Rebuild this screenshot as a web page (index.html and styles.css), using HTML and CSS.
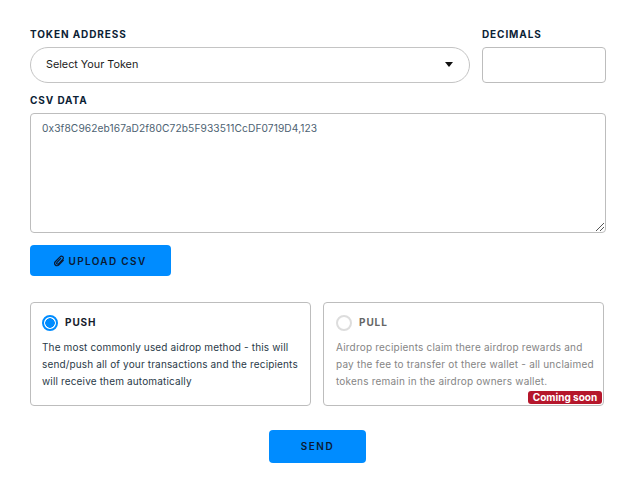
FILE: index.html
```html
<!DOCTYPE html>
<html lang="en">
<head>
    <meta charset="UTF-8">
    <meta name="viewport" content="width=device-width, initial-scale=1.0">
    <title>Airdrop</title>
    <link rel="stylesheet" href="styles.css">
</head>
<body>
    <div class="page">
        <div class="top-row">
            <div class="token-col">
                <div class="label">TOKEN ADDRESS</div>
                <div class="select">
                    <span class="select-text">Select Your Token</span>
                    <span class="caret"></span>
                </div>
            </div>
            <div class="decimals-col">
                <div class="label">DECIMALS</div>
                <div class="decimals"></div>
            </div>
        </div>

        <div class="label csv-label">CSV DATA</div>
        <div class="csv-box">
            0x3f8C962eb167aD2f80C72b5F933511CcDF0719D4,123
            <svg class="grip" width="9" height="9" viewBox="0 0 9 9">
                <path d="M9 1 L1 9 M9 5 L5 9" stroke="#555" stroke-width="1" fill="none"/>
            </svg>
        </div>

        <div class="upload-btn">
            <svg class="clip" width="11" height="12" viewBox="0 0 11 12">
                <path d="M9.6 5.2 L5 9.9 C3.9 11 2.2 11 1.3 10 C0.4 9 0.5 7.5 1.5 6.5 L6 1.9 C6.8 1 8 1 8.8 1.7 C9.6 2.5 9.5 3.7 8.7 4.5 L4.5 8.8 C4 9.3 3.3 9.3 2.9 8.9 C2.5 8.4 2.6 7.8 3 7.3 L7 3.2" stroke="#0b1a33" stroke-width="1.2" fill="none"/>
            </svg>
            UPLOAD CSV
        </div>

        <div class="cards">
            <div class="card">
                <div class="card-head">
                    <span class="radio radio-on"></span>
                    <span class="card-title">PUSH</span>
                </div>
                <p class="card-text">The most commonly used aidrop method - this will<br>send/push all of your transactions and the recipients<br>will receive them automatically</p>
            </div>
            <div class="card card-off">
                <div class="card-head">
                    <span class="radio"></span>
                    <span class="card-title">PULL</span>
                </div>
                <p class="card-text">Airdrop recipients claim there airdrop rewards and<br>pay the fee to transfer ot there wallet - all unclaimed<br>tokens remain in the airdrop owners wallet.</p>
                <span class="soon">Coming soon</span>
            </div>
        </div>

        <div class="send-row">
            <div class="send-btn">SEND</div>
        </div>
    </div>
</body>
</html>
```

FILE: styles.css
```css
* {
    margin: 0;
    padding: 0;
    box-sizing: border-box;
}

body {
    background: #fff;
    font-family: "Inter", "Open Sans", sans-serif;
    color: #1c2733;
}

.page {
    width: 637px;
    padding: 28px 31px 0 30px;
}

.top-row {
    display: flex;
    gap: 12px;
}

.token-col {
    width: 440px;
}

.decimals-col {
    width: 124px;
}

.label {
    height: 19px;
    font-size: 10px;
    line-height: 12px;
    font-weight: 700;
    letter-spacing: 0.9px;
    color: #0c2235;
}

.select {
    display: flex;
    align-items: center;
    justify-content: space-between;
    height: 36px;
    padding: 0 16px 2px 15px;
    border: 1px solid #c4c4c4;
    border-radius: 18px;
    font-size: 10.8px;
    color: #1a1a1a;
}

.caret {
    width: 0;
    height: 0;
    border-left: 4.5px solid transparent;
    border-right: 4.5px solid transparent;
    border-top: 5px solid #111;
}

.decimals {
    height: 36px;
    border: 1px solid #bdbdbd;
    border-radius: 4px;
}

.csv-label {
    margin-top: 11px;
}

.csv-box {
    position: relative;
    width: 576px;
    height: 120px;
    padding: 7px 11px;
    border: 1px solid #bdbdbd;
    border-radius: 4px;
    font-size: 10.2px;
    line-height: 14px;
    letter-spacing: 0.1px;
    color: #4d6272;
}

.grip {
    position: absolute;
    right: 1px;
    bottom: 1px;
}

.upload-btn {
    display: flex;
    align-items: center;
    justify-content: center;
    gap: 3px;
    width: 141px;
    height: 31px;
    margin-top: 12px;
    background: #008cff;
    border-radius: 4px;
    font-size: 10px;
    font-weight: 600;
    letter-spacing: 1.35px;
    color: #0b1a33;
}

.cards {
    display: flex;
    gap: 12px;
    margin-top: 26px;
}

.card {
    position: relative;
    width: 281px;
    height: 104px;
    padding: 11px 11px;
    border: 1px solid #bdbdbd;
    border-radius: 4px;
}

.card-head {
    display: flex;
    align-items: center;
    gap: 7px;
    height: 18px;
}

.radio {
    width: 16px;
    height: 16px;
    border: 2px solid #ddd;
    border-radius: 50%;
}

.radio-on {
    border-color: #008cff;
    background: radial-gradient(circle, #008cff 0 4.5px, #fff 5px);
}

.card-title {
    margin-bottom: 2px;
    font-size: 10px;
    font-weight: 700;
    letter-spacing: 0.9px;
    color: #16202b;
}

.card-text {
    margin-top: 7px;
    font-size: 10px;
    line-height: 17px;
    letter-spacing: 0.15px;
    white-space: nowrap;
    color: #2a3a48;
}

.card-off {
    padding-left: 12px;
}

.card-off .card-title {
    color: #666;
}

.card-off .card-text {
    letter-spacing: 0.2px;
    color: #858585;
}

.soon {
    position: absolute;
    right: 1px;
    bottom: 1px;
    width: 74px;
    height: 13px;
    background: #b5162b;
    border-radius: 3px;
    font-size: 10px;
    line-height: 13px;
    font-weight: 700;
    text-align: center;
    color: #fff;
}

.send-row {
    display: flex;
    justify-content: center;
    margin-top: 24px;
    padding-right: 2px;
}

.send-btn {
    width: 97px;
    height: 33px;
    padding-left: 1px;
    background: #008cff;
    border-radius: 4px;
    font-size: 10px;
    line-height: 33px;
    font-weight: 600;
    letter-spacing: 1.5px;
    text-align: center;
    color: #0b1a33;
}
```
